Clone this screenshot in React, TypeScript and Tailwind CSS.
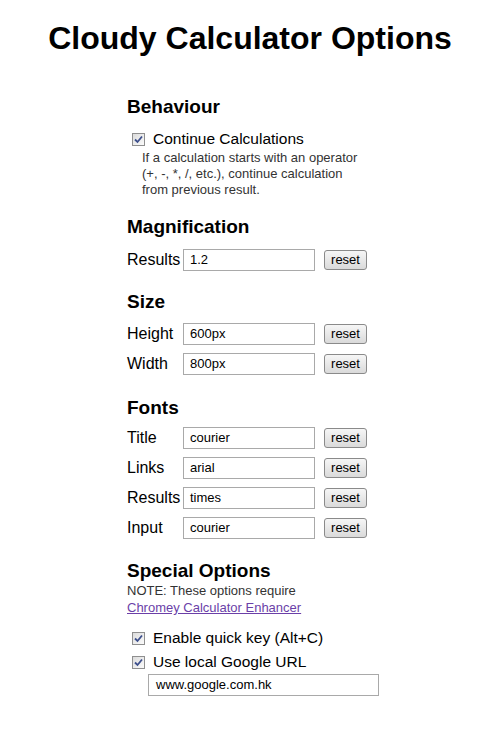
import React from "react";

const font = { fontFamily: '"Liberation Sans", Arial, sans-serif' };

function Check() {
  return (
    <span className="inline-flex h-[13px] w-[13px] shrink-0 items-center justify-center border border-[#8f8f8f] bg-gradient-to-br from-[#dcdcdc] to-[#fbfbfb]">
      <svg width="9" height="9" viewBox="0 0 9 9">
        <path d="M1 4.5 L3.5 7 L8 1.5" fill="none" stroke="#3d4f8c" strokeWidth="1.8" />
      </svg>
    </span>
  );
}

function Heading({ children }: { children: React.ReactNode }) {
  return <h3 className="text-[19px] font-bold leading-[24px] text-black">{children}</h3>;
}

function Row({ label, value }: { label: string; value: string }) {
  return (
    <div className="flex h-[30px] items-center">
      <span className="w-[56px] text-[16px] text-black">{label}</span>
      <div className="flex h-[22px] w-[132px] items-center border border-[#a9a9a9] bg-white pl-[6px] text-[13px] text-black">
        {value}
      </div>
      <button className="ml-[9px] flex h-[20px] w-[43px] items-center justify-center rounded-[3px] border border-[#8a8a8a] bg-gradient-to-b from-[#f6f6f6] to-[#dadada] text-[13px] text-black">
        reset
      </button>
    </div>
  );
}

export default function App() {
  return (
    <div className="min-h-[731px] w-full bg-white" style={font}>
      <h1 className="pt-[18px] text-center text-[32px] font-bold leading-[40px] text-black">
        Cloudy Calculator Options
      </h1>
      <div className="mx-auto mt-[37px] w-[246px]">
        <Heading>Behaviour</Heading>
        <div className="mt-[10px] flex items-center gap-[8px] pl-[5px] text-[15.5px] leading-[20px] text-black">
          <Check />
          <span>Continue Calculations</span>
        </div>
        <p className="w-[240px] pl-[15px] pt-[1px] text-[13px] leading-[16px] text-[#333]">
          If a calculation starts with an operator (+, -, *, /, etc.), continue calculation from previous result.
        </p>

        <div className="mt-[17px]">
          <Heading>Magnification</Heading>
        </div>
        <div className="mt-[6px]">
          <Row label="Results" value="1.2" />
        </div>

        <div className="mt-[15px]">
          <Heading>Size</Heading>
        </div>
        <div className="mt-[5px]">
          <Row label="Height" value="600px" />
          <Row label="Width" value="800px" />
        </div>

        <div className="mt-[17px]">
          <Heading>Fonts</Heading>
        </div>
        <div className="mt-[3px]">
          <Row label="Title" value="courier" />
          <Row label="Links" value="arial" />
          <Row label="Results" value="times" />
          <Row label="Input" value="courier" />
        </div>

        <div className="mt-[16px]">
          <Heading>Special Options</Heading>
        </div>
        <p className="text-[13px] leading-[16px] text-[#333]">NOTE: These options require</p>
        <a href="#" className="block text-[13px] leading-[17px] text-[#6b3fa8] underline">
          Chromey Calculator Enhancer
        </a>
        <div className="mt-[10px] flex items-center gap-[8px] pl-[5px] text-[15.5px] leading-[24px] text-black">
          <Check />
          <span>Enable quick key (Alt+C)</span>
        </div>
        <div className="flex items-center gap-[8px] pl-[5px] text-[15.5px] leading-[24px] text-black">
          <Check />
          <span>Use local Google URL</span>
        </div>
        <div className="ml-[21px] flex h-[22px] w-[231px] items-center border border-[#a9a9a9] bg-white pl-[7px] text-[13px] text-black">
          www.google.com.hk
        </div>
      </div>
    </div>
  );
}
